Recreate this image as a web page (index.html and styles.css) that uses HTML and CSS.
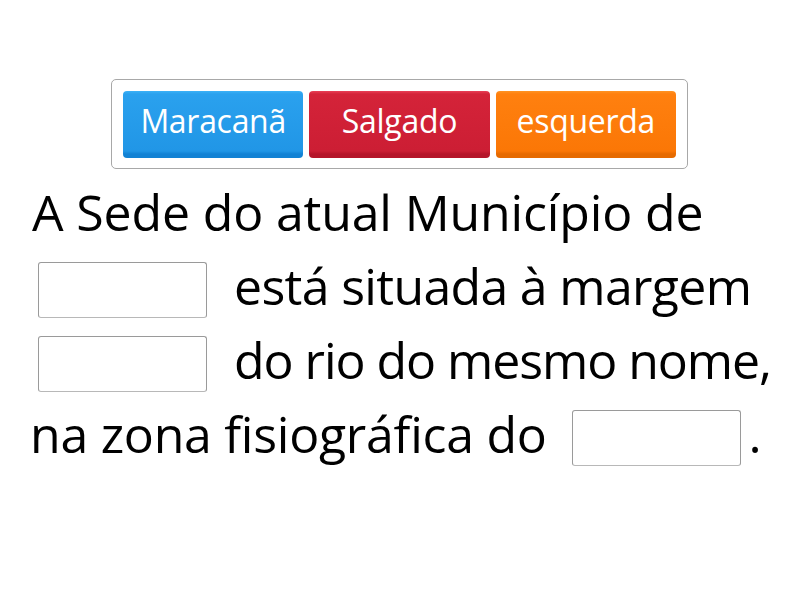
FILE: index.html
```html
<!DOCTYPE html>
<html lang="pt">
<head>
<meta charset="utf-8">
<link rel="stylesheet" href="styles.css">
</head>
<body>
<div class="page">
  <div class="bank">
    <div class="tile blue">Maracanã</div>
    <div class="tile red">Salgado</div>
    <div class="tile orange">esquerda</div>
  </div>
  <div class="text">
    <div class="line l1"><span class="words">A Sede do atual Município de</span></div>
    <div class="line l2"><span class="slot"></span><span class="words">está situada à margem</span></div>
    <div class="line l3"><span class="slot"></span><span class="words">do rio do mesmo nome,</span></div>
    <div class="line l4"><span class="words">na zona fisiográfica do</span><span class="slot"></span><span class="words dot">.</span></div>
  </div>
</div>
</body>
</html>
```
FILE: styles.css
```css
html, body {
  margin: 0;
  padding: 0;
  background: #ffffff;
}
.page {
  width: 800px;
  height: 600px;
  display: flex;
  flex-direction: column;
  align-items: stretch;
  padding-top: 79px;
  box-sizing: border-box;
  font-family: "Open Sans", "DejaVu Sans", sans-serif;
}
.bank {
  align-self: flex-start;
  margin-left: 111px;
  width: 577px;
  height: 90px;
  box-sizing: border-box;
  border: 1px solid #a8a8a8;
  border-radius: 5px;
  padding: 11px;
  display: flex;
  gap: 6px;
}
.tile {
  flex: 1;
  height: 67px;
  border-radius: 4px;
  display: flex;
  align-items: center;
  justify-content: center;
  color: #ffffff;
  font-size: 32px;
  font-weight: 500;
  letter-spacing: -0.3px;
  box-sizing: border-box;
  padding-bottom: 8px;
}
.blue {
  background: linear-gradient(#3cb2f7 0, #2aa1ee 3px, #2196e6 60px, #1282d4 63px);
}
.red {
  background: linear-gradient(#ea4057 0, #d42339 3px, #cc1e34 60px, #b5152a 63px);
}
.orange {
  background: linear-gradient(#ff9424 0, #ff800f 3px, #fb7706 60px, #e66a00 63px);
}
.text {
  margin-top: 10px;
  display: flex;
  flex-direction: column;
  color: #000000;
  font-size: 50px;
}
.line {
  height: 74px;
  display: flex;
  align-items: center;
  padding-left: 30px;
  white-space: nowrap;
}
.words {
  line-height: 64px;
  margin-bottom: 9px;
}
.l1 .words { margin-left: 2px; letter-spacing: -0.15px; }
.l2 .words { letter-spacing: -0.67px; }
.l3 .words { letter-spacing: -1.05px; }
.l4 .words { letter-spacing: -0.26px; }
.slot {
  width: 169px;
  height: 56px;
  box-sizing: border-box;
  border: 1px solid #9a9a9a;
  border-bottom-color: #b8b8b8;
  border-radius: 3px;
  background: #ffffff;
  margin-left: 8px;
  margin-right: 27px;
}
.l4 .slot {
  margin-left: 25px;
  margin-right: 8px;
}
```
